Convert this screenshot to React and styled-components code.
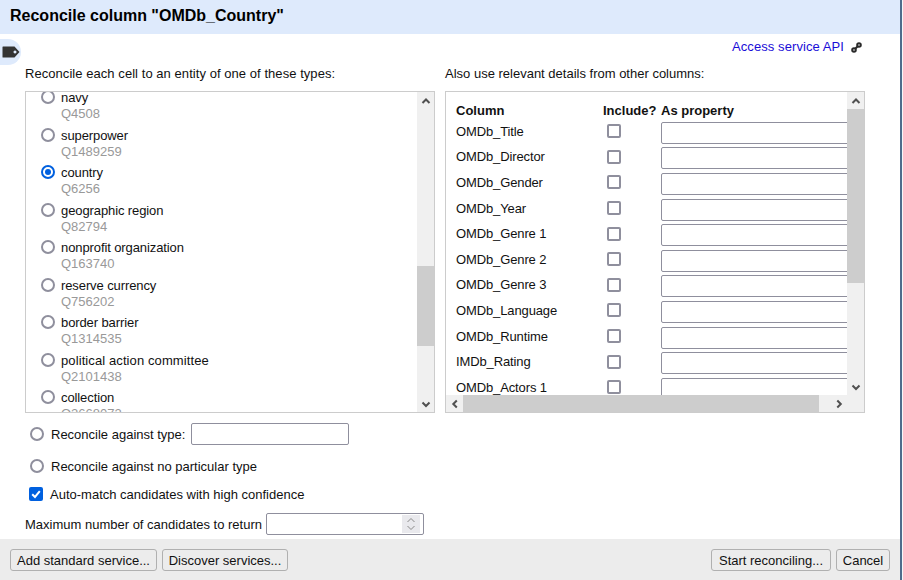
import React from "react";
import styled, { createGlobalStyle } from "styled-components";

const Global = createGlobalStyle`
  html, body { margin: 0; padding: 0; background: #fff; }
  * { box-sizing: border-box; }
  body { font-family: "Liberation Sans", Arial, sans-serif; font-size: 13px; color: #111; }
`;

const Page = styled.div`
  width: 903px; height: 580px; overflow: hidden; display: flex; background: #f4f6f8;
`;
const Dialog = styled.div`
  width: 902px; height: 580px; display: flex; flex-direction: column; background: #fff;
  border-right: 2px solid #4f6c8c;
`;
const Header = styled.h1`
  margin: 0; height: 34px; background: #deeafc; padding: 0 0 0 10px;
  font-size: 16px; font-weight: 700; line-height: 31px; color: #000;
`;
const Body = styled.div`
  flex: 1; min-height: 0; display: flex; flex-direction: column;
`;
const TopBar = styled.div`
  height: 32px; display: flex; justify-content: space-between; padding: 5px 38px 0 0;
`;
const TypeTab = styled.div`
  width: 21px; height: 26px; background: #deeafc; border-radius: 0 13px 13px 0;
  display: flex; align-items: center; padding-left: 2px;
`;
const ApiLink = styled.div`
  display: flex; align-items: flex-start; gap: 7px; height: 16px;
`;
const Anchor = styled.a`
  color: #1a0dd8; text-decoration: none; line-height: 16px; letter-spacing: 0.08px;
`;
const Columns = styled.div`
  display: grid; grid-template-columns: 410px 420px; column-gap: 10px; padding-left: 25px;
`;
const Column = styled.div`
  display: flex; flex-direction: column;
`;
const Caption = styled.div`
  height: 25px; line-height: 16px; letter-spacing: ${p => p.$track || 0}px;
`;
const ScrollBox = styled.div`
  height: 322px; border: 1px solid #ccc; display: grid; overflow: hidden;
  grid-template-columns: minmax(0, 1fr) 17px;
  grid-template-rows: minmax(0, 1fr) ${p => (p.$hbar ? "17px" : "0")};
`;
const Viewport = styled.div`
  overflow: hidden; min-width: 0; min-height: 0;
`;
const TypeList = styled.ul`
  list-style: none; margin: -2px 0 0; padding: 0 0 0 15px;
`;
const TypeItem = styled.li`
  height: 37.5px; display: flex; align-items: flex-start; gap: 6px;
`;
const TypeText = styled.div`
  display: flex; flex-direction: column; line-height: 16px;
`;
const TypeName = styled.span`
  height: 16px; letter-spacing: ${p => p.$track ?? -0.1}px;
`;
const TypeId = styled.span`
  color: #999; height: 16px;
`;
const Radio = styled.span`
  flex: none; width: 14px; height: 14px; border-radius: 50%;
  border: 2px solid ${p => (p.$on ? "#0060df" : "#8f8f9d")}; background: #fff;
  display: flex; align-items: center; justify-content: center;
  &::after { content: ""; width: 6px; height: 6px; border-radius: 50%; background: ${p => (p.$on ? "#0060df" : "transparent")}; }
`;
const VBar = styled.div`
  background: #f0f0f0; display: flex; flex-direction: column; min-height: 0;
`;
const HBar = styled.div`
  background: #f0f0f0; display: flex; min-width: 0;
`;
const Arrow = styled.div`
  flex: none; width: 17px; height: 17px; display: flex; align-items: center; justify-content: center;
`;
const VSpace = styled.div`
  height: ${p => p.$h}px; flex: ${p => (p.$h ? "none" : 1)};
`;
const VThumb = styled.div`
  flex: none; height: ${p => p.$h}px; background: #cdcdcd;
`;
const HThumb = styled.div`
  flex: none; width: ${p => p.$w}px; background: #cdcdcd;
`;
const Corner = styled.div`
  background: #f0f0f0;
`;
const PropsTable = styled.div`
  width: 500px; padding: 9px 0 0 10px;
  display: grid; grid-template-columns: 147px 58px 1fr;
  grid-template-rows: 19px; grid-auto-rows: 25.6px;
  align-items: center;
`;
const Th = styled.div`
  font-weight: 700; height: 19px; line-height: 20px; white-space: nowrap;
`;
const Cell = styled.div`
  line-height: 16px; display: flex; padding-left: ${p => p.$pl || 0}px;
  padding-bottom: ${p => p.$pb || 0}px;
  height: 22px; align-items: center; white-space: nowrap; letter-spacing: -0.12px;
`;
const Check = styled.span`
  flex: none; width: 14px; height: 14px; border-radius: 2px; margin-bottom: ${p => p.$lift || 0}px;
  border: 2px solid ${p => (p.$on ? "#0060df" : "#8f8f9d")}; background: ${p => (p.$on ? "#0060df" : "#fff")};
  display: flex; align-items: center; justify-content: center;
`;
const TextBox = styled.div`
  width: ${p => p.$w}px; height: 22px; background: #fff; flex: none; margin-left: ${p => p.$ml || 0}px;
  border: 1px solid #8f8f9d; border-radius: 2px; display: flex; justify-content: flex-end; align-items: center;
  padding-right: 3px;
`;
const Options = styled.div`
  display: flex; flex-direction: column;
`;
const Option = styled.div`
  display: flex; align-items: center; height: ${p => p.$h}px; padding-left: ${p => p.$pl}px; gap: ${p => p.$gap || 0}px;
`;
const Spinner = styled.div`
  width: 18px; height: 18px; background: #e9e9ed; display: flex; flex-direction: column;
  align-items: center; justify-content: center; gap: 2px;
`;
const Footer = styled.div`
  height: 41px; background: #ececec; display: flex; align-items: center; justify-content: space-between;
  padding: 1px 10px 0 10px;
`;
const ButtonGroup = styled.div`
  display: flex; gap: 5px;
`;
const Button = styled.button`
  height: 22px; width: ${p => p.$w}px; padding: 1px 0 0; font: inherit; color: #111;
  background: #ececec; border: 1px solid #b0b0b0; border-radius: 3px; line-height: 18px;
`;

const Chevron = ({ dir }) => {
  const d = {
    up: "M1.5 7 L5 3.5 L8.5 7",
    down: "M1.5 3.5 L5 7 L8.5 3.5",
    left: "M6.8 1.5 L3.3 5 L6.8 8.5",
    right: "M3.3 1.5 L6.8 5 L3.3 8.5",
  }[dir];
  return (
    <svg width="10" height="10" viewBox="0 0 10 10">
      <path d={d} fill="none" stroke="#505050" strokeWidth="2" />
    </svg>
  );
};
const TagIcon = () => (
  <svg width="18" height="12" viewBox="0 0 18 12">
    <path fillRule="evenodd" fill="#333" d="M0.5 1 Q0.5 0.5 1 0.5 H12.5 L17.5 6 L12.5 11.5 H1 Q0.5 11.5 0.5 11 Z M13 4.5 a1.5 1.5 0 1 0 0.01 0 Z" />
  </svg>
);
const LinkIcon = () => (
  <svg width="11" height="11" viewBox="0 0 11 11" style={{ marginTop: 3 }}>
    <g fill="none" stroke="#2a2a2a" strokeWidth="2">
      <circle cx="3" cy="8" r="1.8" />
      <circle cx="8" cy="3" r="1.8" />
      <path d="M4.2 6.8 L6.8 4.2" />
    </g>
  </svg>
);
const Tick = () => (
  <svg width="10" height="10" viewBox="0 0 10 10">
    <path d="M1.2 5.2 L4 8 L8.8 2.2" fill="none" stroke="#fff" strokeWidth="2" />
  </svg>
);
const SpinGlyph = ({ up }) => (
  <svg width="10" height="6" viewBox="0 0 10 6">
    <path d={up ? "M1.5 5 L5 1.5 L8.5 5" : "M1.5 1 L5 4.5 L8.5 1"} fill="none" stroke="#8a8a8a" strokeWidth="1" />
  </svg>
);

const types = [
  { name: "navy", id: "Q4508" },
  { name: "superpower", id: "Q1489259" },
  { name: "country", id: "Q6256", on: true },
  { name: "geographic region", id: "Q82794" },
  { name: "nonprofit organization", id: "Q163740" },
  { name: "reserve currency", id: "Q756202" },
  { name: "border barrier", id: "Q1314535" },
  { name: "political action committee", id: "Q2101438", track: 0.1 },
  { name: "collection", id: "Q2668072" },
];
const columns = [
  "OMDb_Title", "OMDb_Director", "OMDb_Gender", "OMDb_Year", "OMDb_Genre 1", "OMDb_Genre 2",
  "OMDb_Genre 3", "OMDb_Language", "OMDb_Runtime", "IMDb_Rating", "OMDb_Actors 1",
];

export default function App() {
  return (
    <Page>
      <Global />
      <Dialog>
        <Header>Reconcile column "OMDb_Country"</Header>
        <Body>
          <TopBar>
            <TypeTab><TagIcon /></TypeTab>
            <ApiLink>
              <Anchor href="#">Access service API</Anchor>
              <LinkIcon />
            </ApiLink>
          </TopBar>
          <Columns>
            <Column>
              <Caption $track={0.055}>Reconcile each cell to an entity of one of these types:</Caption>
              <ScrollBox>
                <Viewport>
                  <TypeList>
                    {types.map(t => (
                      <TypeItem key={t.id}>
                        <Radio $on={t.on} />
                        <TypeText>
                          <TypeName $track={t.track}>{t.name}</TypeName>
                          <TypeId>{t.id}</TypeId>
                        </TypeText>
                      </TypeItem>
                    ))}
                  </TypeList>
                </Viewport>
                <VBar>
                  <Arrow><Chevron dir="up" /></Arrow>
                  <VSpace $h={157} />
                  <VThumb $h={80} />
                  <VSpace />
                  <Arrow><Chevron dir="down" /></Arrow>
                </VBar>
              </ScrollBox>
            </Column>
            <Column>
              <Caption>Also use relevant details from other columns:</Caption>
              <ScrollBox $hbar>
                <Viewport>
                  <PropsTable>
                    <Th>Column</Th>
                    <Th>Include?</Th>
                    <Th>As property</Th>
                    {columns.map(c => (
                      <React.Fragment key={c}>
                        <Cell $pb={2}>{c}</Cell>
                        <Cell $pl={4}><Check $lift={3} /></Cell>
                        <Cell><TextBox $w={260} /></Cell>
                      </React.Fragment>
                    ))}
                  </PropsTable>
                </Viewport>
                <VBar>
                  <Arrow><Chevron dir="up" /></Arrow>
                  <VThumb $h={174} />
                  <VSpace />
                  <Arrow><Chevron dir="down" /></Arrow>
                </VBar>
                <HBar>
                  <Arrow><Chevron dir="left" /></Arrow>
                  <HThumb $w={356} />
                  <VSpace />
                  <Arrow><Chevron dir="right" /></Arrow>
                </HBar>
                <Corner />
              </ScrollBox>
            </Column>
          </Columns>
          <Options>
            <Option $h={42} $pl={30} $gap={7}>
              <Radio />
              <span>Reconcile against type:</span>
              <TextBox $w={158} $ml={-1} />
            </Option>
            <Option $h={22} $pl={30} $gap={7}>
              <Radio />
              <span>Reconcile against no particular type</span>
            </Option>
            <Option $h={34} $pl={29} $gap={7}>
              <Check $on><Tick /></Check>
              <span>Auto-match candidates with high confidence</span>
            </Option>
            <Option $h={26} $pl={25} $gap={4}>
              <span>Maximum number of candidates to return</span>
              <TextBox $w={158}>
                <Spinner><SpinGlyph up /><SpinGlyph /></Spinner>
              </TextBox>
            </Option>
          </Options>
        </Body>
        <Footer>
          <ButtonGroup>
            <Button $w={147}>Add standard service...</Button>
            <Button $w={126}>Discover services...</Button>
          </ButtonGroup>
          <ButtonGroup>
            <Button $w={120}>Start reconciling...</Button>
            <Button $w={54}>Cancel</Button>
          </ButtonGroup>
        </Footer>
      </Dialog>
    </Page>
  );
}
